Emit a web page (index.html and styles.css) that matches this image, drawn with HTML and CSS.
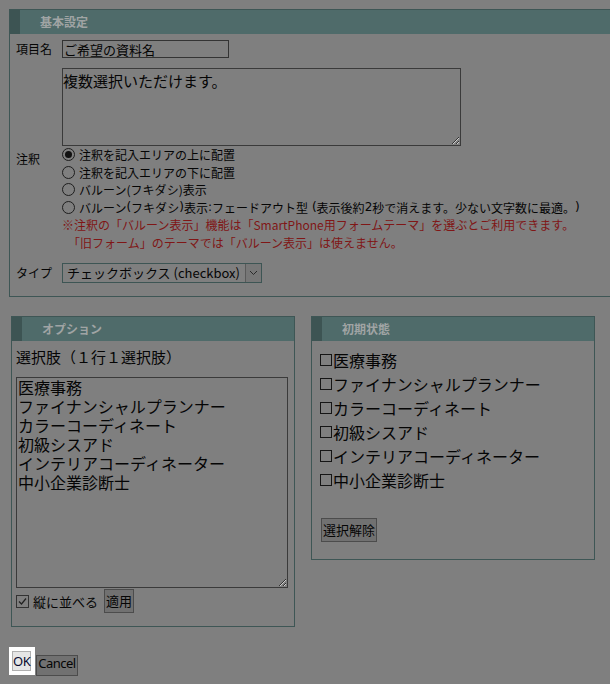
FILE: index.html
```html
<!DOCTYPE html>
<html lang="ja">
<head>
<meta charset="utf-8">
<title>項目設定</title>
<link rel="stylesheet" href="styles.css">
</head>
<body>
<div class="panel panel-basic">
  <div class="panel-head">基本設定</div>
  <div class="basic-body">
    <div class="row row-name">
      <span class="label">項目名</span>
      <input class="text-input" type="text" value="ご希望の資料名">
    </div>
    <div class="row row-note">
      <span class="label label-note">注釈</span>
      <div class="note-col">
        <textarea class="note-area">複数選択いただけます。</textarea>
        <ul class="radios">
          <li><span class="radio checked"></span>注釈を記入エリアの上に配置</li>
          <li><span class="radio"></span>注釈を記入エリアの下に配置</li>
          <li><span class="radio"></span>バルーン(フキダシ)表示</li>
          <li><span class="radio"></span>バルーン<span class="lat">(</span>フキダシ<span class="lat">)</span>表示<span class="lat">:</span>フェードアウト型<span class="lat"> (</span>表示後約<span class="lat">2</span>秒で消えます。少ない文字数に最適。<span class="lat">)</span></li>
        </ul>
        <p class="warn">※注釈の「バルーン表示」機能は「SmartPhone用フォームテーマ」を選ぶとご利用できます。<br>　「旧フォーム」のテーマでは「バルーン表示」は使えません。</p>
      </div>
    </div>
    <div class="row row-type">
      <span class="label">タイプ</span>
      <div class="select">
        <span class="select-value">チェックボックス (checkbox)</span>
        <span class="select-arrow"><svg width="9" height="6" viewBox="0 0 9 6"><path d="M1 1 L4.5 4.5 L8 1" fill="none" stroke="#2a2a2a" stroke-width="1"/></svg></span>
      </div>
    </div>
  </div>
</div>

<div class="lower">
  <div class="panel panel-option">
    <div class="panel-head">オプション</div>
    <div class="option-body">
      <div class="option-title">選択肢（１行１選択肢）</div>
      <textarea class="option-area">医療事務
ファイナンシャルプランナー
カラーコーディネート
初級シスアド
インテリアコーディネーター
中小企業診断士</textarea>
      <div class="option-foot">
        <span class="check"><svg width="13" height="13" viewBox="0 0 13 13"><rect x="0.5" y="0.5" width="12" height="12" fill="none" stroke="#333"/><path d="M3 6.5 L5.5 9 L10 3.5" fill="none" stroke="#222" stroke-width="1.2"/></svg></span>
        <span class="check-label">縦に並べる</span>
        <button class="btn">適用</button>
      </div>
    </div>
  </div>

  <div class="panel panel-init">
    <div class="panel-head">初期状態</div>
    <div class="init-body">
      <ul class="init-list">
        <li><span class="box"></span>医療事務</li>
        <li><span class="box"></span>ファイナンシャルプランナー</li>
        <li><span class="box"></span>カラーコーディネート</li>
        <li><span class="box"></span>初級シスアド</li>
        <li><span class="box"></span>インテリアコーディネーター</li>
        <li><span class="box"></span>中小企業診断士</li>
      </ul>
      <button class="btn btn-clear">選択解除</button>
    </div>
  </div>
</div>

<div class="footer">
  <span class="ok-wrap"><button class="btn-ok">OK</button></span>
  <button class="btn-cancel">Cancel</button>
</div>
</body>
</html>
```

FILE: styles.css
```css
html, body {
  margin: 0;
  padding: 0;
  background: #7f7f7f;
}
body {
  font-family: "Noto Sans CJK JP", "Noto Sans", sans-serif;
  color: #050505;
  font-size: 12px;
  overflow: hidden;
}
ul {
  list-style: none;
  margin: 0;
  padding: 0;
}

/* panels */
.panel {
  border: 1px solid #3e5655;
}
.panel-head {
  height: 24px;
  line-height: 24px;
  background: #4f6b6a;
  border-left: 10px solid #3d5453;
  padding-left: 20px;
  color: #a0a4a4;
  font-weight: bold;
  font-size: 12px;
}

/* basic settings */
.panel-basic {
  margin: 9px 0 0 9px;
  border-right: 0;
  padding-bottom: 13px;
}
.basic-body {
  padding-left: 6px;
}
.row {
  display: grid;
  grid-template-columns: 46px 1fr;
  align-items: center;
}
.label {
  font-size: 12px;
  line-height: 16px;
}
.row-name {
  margin-top: 6px;
}
.text-input {
  box-sizing: border-box;
  width: 167px;
  height: 18px;
  margin: 0;
  padding: 0 1px;
  border: 1px solid #333;
  background: transparent;
  font-family: "Noto Sans CJK JP", sans-serif;
  font-size: 13px;
  line-height: 16px;
  color: #050505;
}
.row-note {
  margin-top: 10px;
  align-items: start;
}
.label-note {
  padding-top: 83px;
}
.note-area {
  display: block;
  box-sizing: border-box;
  width: 399px;
  height: 78px;
  margin: 0;
  padding: 2px 0;
  border: 1px solid #3a3a3a;
  background: transparent;
  font-family: "Noto Sans CJK JP", sans-serif;
  font-size: 15px;
  line-height: 20px;
  color: #050505;
}
.radios li {
  display: flex;
  align-items: center;
  height: 17.5px;
  line-height: 17.5px;
  font-size: 12px;
  white-space: pre;
}
.lat {
  font-family: "DejaVu Sans", sans-serif;
}
.radio {
  box-sizing: border-box;
  width: 13px;
  height: 13px;
  border: 1px solid #1e1e1e;
  border-radius: 50%;
  margin-right: 4px;
  display: flex;
  align-items: center;
  justify-content: center;
}
.radio.checked::after {
  content: "";
  width: 7px;
  height: 7px;
  border-radius: 50%;
  background: #111;
}
.warn {
  margin: 0;
  font-size: 12px;
  line-height: 18px;
  color: #801616;
  white-space: nowrap;
}
.row-type {
  margin-top: 11px;
}
.select {
  box-sizing: border-box;
  width: 200px;
  height: 20px;
  border: 1px solid #3d5554;
  display: flex;
  align-items: stretch;
}
.select-value {
  flex: 1;
  padding-left: 4px;
  font-size: 13px;
  line-height: 18px;
}
.select-arrow {
  width: 15px;
  border-left: 1px solid #5a5a5a;
  background: #777;
  display: flex;
  align-items: center;
  justify-content: center;
}

/* lower panels */
.lower {
  display: flex;
  align-items: flex-start;
  gap: 16px;
  margin: 19px 0 0 11px;
}
.panel-option,
.panel-init {
  box-sizing: border-box;
  width: 284px;
}
.option-body {
  padding: 0 6px 13px 4px;
}
.option-title {
  margin-top: 6px;
  font-size: 15px;
  line-height: 20px;
}
.option-area {
  display: block;
  box-sizing: border-box;
  width: 272px;
  height: 211px;
  margin: 10px 0 0;
  padding: 0 1px;
  border: 1px solid #3a3a3a;
  background: transparent;
  font-family: "Noto Sans CJK JP", sans-serif;
  font-size: 16px;
  line-height: 19px;
  color: #050505;
}
.option-foot {
  display: flex;
  align-items: center;
  height: 24px;
  margin-top: 1px;
}
.check {
  display: flex;
  width: 13px;
  height: 13px;
  margin-right: 4px;
}
.check-label {
  font-size: 13px;
  margin-right: 6px;
}
.btn {
  box-sizing: border-box;
  height: 24px;
  margin: 0;
  padding: 0 1px;
  border: 1px solid #4c4c4c;
  background: #717171;
  font-family: "Noto Sans CJK JP", sans-serif;
  font-size: 13px;
  line-height: 20px;
  color: #050505;
}
.init-body {
  padding: 7px 8px 17px 8px;
}
.init-list li {
  display: flex;
  align-items: center;
  height: 24px;
  font-size: 16px;
  line-height: 24px;
  white-space: nowrap;
}
.box {
  box-sizing: border-box;
  width: 12px;
  height: 12px;
  border: 1px solid #151515;
  margin-right: 1px;
}
.btn-clear {
  margin-top: 26px;
  margin-left: 1px;
}

/* footer */
.footer {
  display: flex;
  align-items: flex-start;
  margin: 20px 0 0 9px;
}
.ok-wrap {
  display: flex;
  background: #ffffff;
  padding: 4px 4px 4px 3px;
}
.btn-ok,
.btn-cancel {
  box-sizing: border-box;
  margin: 0;
  padding: 0;
  font-family: "Noto Sans", sans-serif;
  font-size: 13px;
  letter-spacing: -0.5px;
}
.btn-ok {
  height: 20px;
  line-height: 18px;
  border: 1px solid #b0b0b0;
  background: #e6e6e6;
  color: #0a0a30;
}
.btn-cancel {
  height: 21px;
  line-height: 14px;
  margin-top: 8px;
  margin-left: 1px;
  padding: 0 1px 5px;
  border: 1px solid #4c4c4c;
  background: #717171;
  color: #050505;
}
```
